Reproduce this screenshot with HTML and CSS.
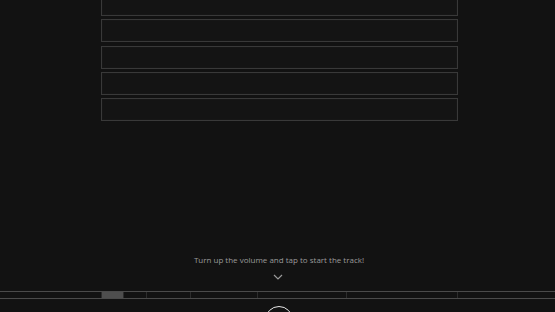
FILE: index.html
```html
<!DOCTYPE html>
<html lang="en">
<head>
    <meta charset="UTF-8">
    <meta name="viewport" content="width=device-width, initial-scale=1.0">
    <title>Track</title>
    <link rel="stylesheet" href="styles.css">
</head>
<body>
    <div class="page">
        <!-- Track slots -->
        <div class="slots">
            <div class="slot"></div>
            <div class="slot"></div>
            <div class="slot"></div>
            <div class="slot"></div>
            <div class="slot"></div>
        </div>

        <!-- Prompt + timeline -->
        <div class="footer">
            <p class="prompt">Turn up the volume and tap to start the track!</p>
            <svg class="chevron" width="10" height="6" viewBox="0 0 10 6">
                <path d="M1 1 L5 5 L9 1" fill="none" stroke="#9a9a9a" stroke-width="1.2"/>
            </svg>
            <div class="timeline">
                <div class="seg" style="width:101px"></div>
                <div class="seg active" style="width:22px"></div>
                <div class="seg" style="width:23px"></div>
                <div class="seg" style="width:44px"></div>
                <div class="seg" style="width:67px"></div>
                <div class="seg" style="width:89px"></div>
                <div class="seg" style="width:111px"></div>
                <div class="seg last"></div>
            </div>
            <div class="play"></div>
        </div>
    </div>
</body>
</html>
```

FILE: styles.css
```css
body {
    margin: 0;
    background-color: #121212;
    font-family: "Open Sans", sans-serif;
    overflow: hidden;
}

.page {
    height: 312px;
    display: flex;
    flex-direction: column;
    overflow: hidden;
}

/* Slots */
.slots {
    margin-top: -7px;
    margin-left: 101px;
    width: 357px;
    display: flex;
    flex-direction: column;
    gap: 3.3px;
}

.slot {
    height: 23px;
    flex-shrink: 0;
    box-sizing: border-box;
    border: 1px solid #393939;
    box-shadow: inset 0 0 0 1px #161616;
    background-color: #141414;
}

/* Footer */
.footer {
    margin-top: auto;
    display: flex;
    flex-direction: column;
    align-items: center;
}

.prompt {
    margin: 0 0 0 3px;
    font-size: 8px;
    line-height: 12px;
    color: #9a9a9a;
}

.chevron {
    margin-top: 8px;
    margin-left: 1px;
}

.timeline {
    margin-top: 11px;
    width: 100%;
    height: 8px;
    flex-shrink: 0;
    box-sizing: border-box;
    border-top: 1px solid #4a4a4a;
    border-bottom: 1px solid #4a4a4a;
    display: flex;
}

.seg {
    height: 100%;
    border-left: 1px solid #2c2c2c;
    box-sizing: border-box;
}

.seg:first-child {
    border-left: none;
}

.seg.active {
    background-color: #4e4e4e;
}

.seg.last {
    flex: 1;
}

.play {
    margin-top: 7px;
    margin-left: 2px;
    width: 28px;
    height: 28px;
    flex-shrink: 0;
    box-sizing: border-box;
    border: 1.5px solid #e8e8e8;
    border-radius: 50%;
    margin-bottom: -22px;
}
```
